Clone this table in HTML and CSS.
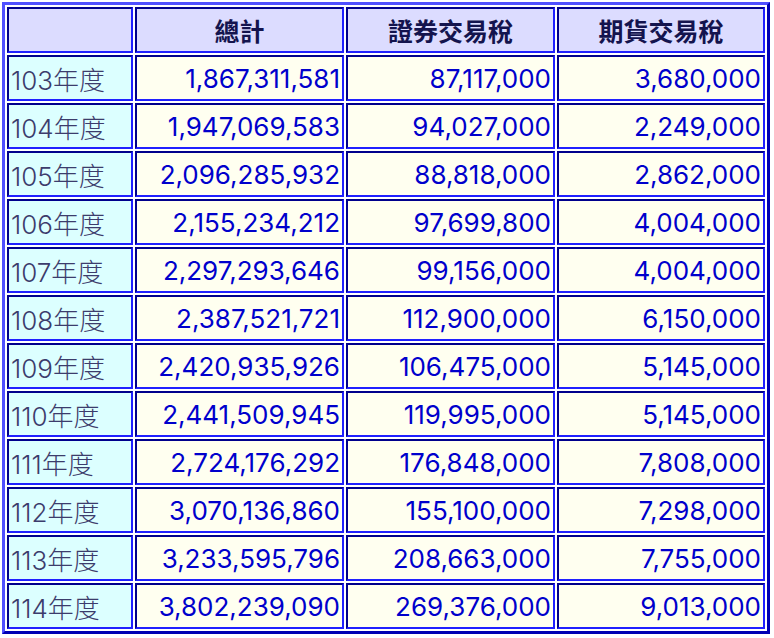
FILE: index.html
```html
<!DOCTYPE html>
<html lang="zh-Hant">
<head>
<meta charset="utf-8">
<title>稅收統計</title>
<link rel="stylesheet" href="styles.css">
</head>
<body>
<table class="tax">
  <colgroup>
    <col class="c-year"><col class="c-total"><col class="c-sec"><col class="c-fut">
  </colgroup>
  <thead>
    <tr><th></th><th>總計</th><th>證券交易稅</th><th>期貨交易稅</th></tr>
  </thead>
  <tbody>
    <tr><td class="year">103年度</td><td class="num">1,867,311,581</td><td class="num">87,117,000</td><td class="num">3,680,000</td></tr>
    <tr><td class="year">104年度</td><td class="num">1,947,069,583</td><td class="num">94,027,000</td><td class="num">2,249,000</td></tr>
    <tr><td class="year">105年度</td><td class="num">2,096,285,932</td><td class="num">88,818,000</td><td class="num">2,862,000</td></tr>
    <tr><td class="year">106年度</td><td class="num">2,155,234,212</td><td class="num">97,699,800</td><td class="num">4,004,000</td></tr>
    <tr><td class="year">107年度</td><td class="num">2,297,293,646</td><td class="num">99,156,000</td><td class="num">4,004,000</td></tr>
    <tr><td class="year">108年度</td><td class="num">2,387,521,721</td><td class="num">112,900,000</td><td class="num">6,150,000</td></tr>
    <tr><td class="year">109年度</td><td class="num">2,420,935,926</td><td class="num">106,475,000</td><td class="num">5,145,000</td></tr>
    <tr><td class="year">110年度</td><td class="num">2,441,509,945</td><td class="num">119,995,000</td><td class="num">5,145,000</td></tr>
    <tr><td class="year">111年度</td><td class="num">2,724,176,292</td><td class="num">176,848,000</td><td class="num">7,808,000</td></tr>
    <tr><td class="year">112年度</td><td class="num">3,070,136,860</td><td class="num">155,100,000</td><td class="num">7,298,000</td></tr>
    <tr><td class="year">113年度</td><td class="num">3,233,595,796</td><td class="num">208,663,000</td><td class="num">7,755,000</td></tr>
    <tr><td class="year">114年度</td><td class="num">3,802,239,090</td><td class="num">269,376,000</td><td class="num">9,013,000</td></tr>
  </tbody>
</table>
</body>
</html>
```
FILE: styles.css
```css
html, body {
  margin: 0;
  padding: 0;
  background: #ffffff;
}
body {
  padding: 2px;
  font-family: Inter, "Noto Sans CJK TC", sans-serif;
  font-size: 26px;
}
.tax {
  width: 768px;
  table-layout: fixed;
  border-collapse: separate;
  border-spacing: 2px;
  border-style: solid;
  border-width: 3px;
  border-color: #5050ff #0000b4 #0000b4 #5050ff;
}
.c-year { width: 126px; }
.c-total { width: 209px; }
.c-sec { width: 209px; }
.c-fut { width: 208px; }
.tax th,
.tax td {
  box-sizing: border-box;
  height: 46px;
  padding: 0 2px;
  border-style: solid;
  border-width: 2px;
  border-color: #00008c #2020ff #2020ff #00008c;
  white-space: nowrap;
}
.tax th {
  background: #dcdcff;
  color: #14144e;
  font-weight: 700;
  text-align: center;
  font-family: "Noto Sans CJK TC", sans-serif;
  font-size: 25px;
}
.tax td.year {
  background: #dcffff;
  color: #3c3c6c;
  font-weight: 300;
  text-align: left;
}
.tax td.num {
  background: #fffff0;
  color: #0000cc;
  text-align: right;
}
```
